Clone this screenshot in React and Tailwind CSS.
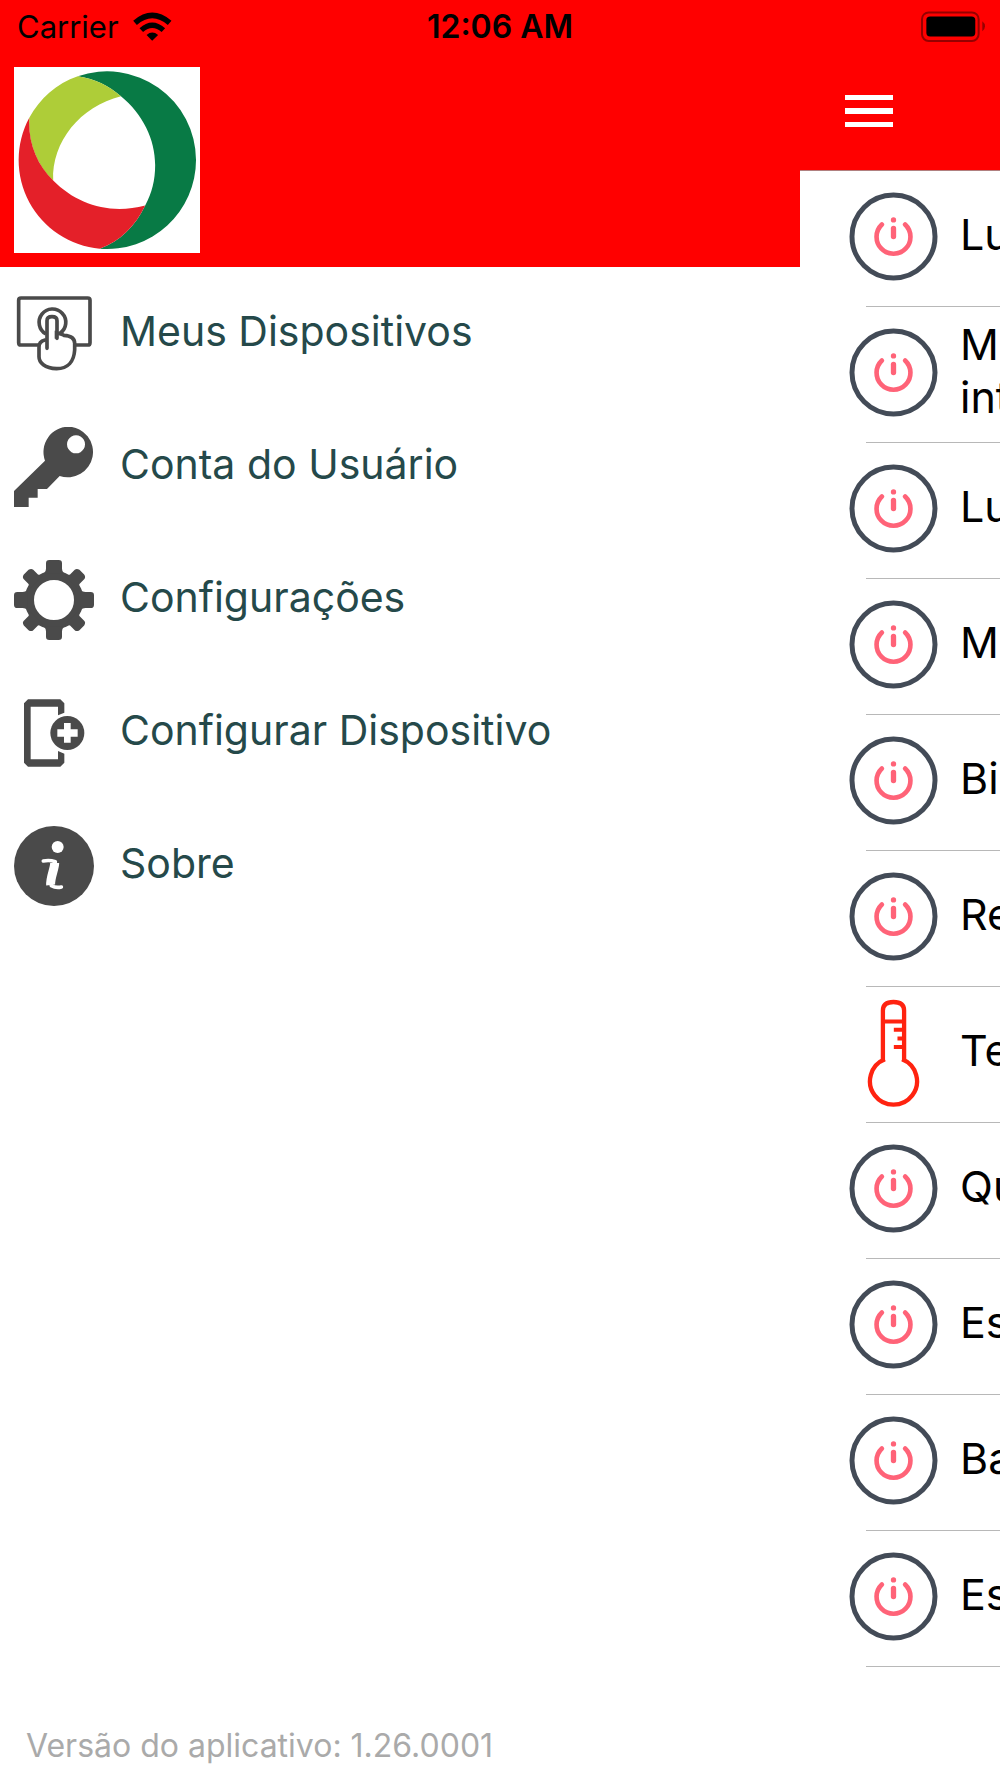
import React from "react";

const GRAY = "#4a4a4a";

function Logo() {
  return (
    <svg viewBox="40 200 560 560" className="size-[186px] bg-white" role="img" aria-label="Logo">
      <path fill="#087a45" d="M232 228A268 268 0 0 1 588 480A268 268 0 0 1 298 747C360 724 405 680 435 617C455 580 465 540 465 495C465 418 428 342 362 288C325 257 285 236 232 228Z" />
      <path fill="#aecd38" d="M232 228C285 236 325 257 362 288C240 318 153 425 158 542C110 495 82 430 86 353C118 295 168 250 232 228Z" />
      <path fill="#e42029" d="M86 353C82 430 110 495 158 542C230 615 330 645 435 617C405 680 360 724 298 747A268 268 0 0 1 86 353Z" />
    </svg>
  );
}

function TouchIcon() {
  return (
    <svg viewBox="40 40 240 240" className="size-20 shrink-0" fill="none" stroke={GRAY} strokeWidth="11" aria-hidden="true">
      <path d="M112 193H61Q54 193 54 186V59Q54 52 61 52H261Q268 52 268 59V186Q268 193 261 193H226" />
      <path d="M136 160A40 40 0 1 1 178 158" />
      <path strokeLinecap="round" d="M139 203V120Q139 108 154 108Q169 108 169 120V173" />
      <path strokeLinecap="round" d="M171 158Q186 162 190 164Q222 166 222 188V208C220 242 202 264 168 264C132 262 115 246 115 228V200Q114 183 133 178" />
      <path strokeWidth="8" d="M166 150V174" />
    </svg>
  );
}

function KeyIcon() {
  return (
    <svg viewBox="40 440 240 240" className="size-20 shrink-0" fill={GRAY} aria-hidden="true">
      <path fillRule="evenodd" d="M205 439A76 76 0 1 1 177 587L139 626H111V652H84V680H40V632L133 541A76 76 0 0 1 205 439ZM226 465a27 27 0 1 0 0.1 0Z" />
    </svg>
  );
}

function GearIcon() {
  return (
    <svg viewBox="40 44 240 240" className="size-20 shrink-0" fill={GRAY} aria-hidden="true">
      <circle cx="160" cy="164" r="74" fill="none" stroke={GRAY} strokeWidth="28" />
      {[0, 90, 180, 270].map((a) => (
        <path key={a} transform={`rotate(${a} 160 164)`} d="M130 84Q136 78 136 70V54Q136 44 146 44H174Q184 44 184 54V70Q184 78 190 84Z" />
      ))}
      {[45, 135, 225, 315].map((a) => (
        <path key={a} transform={`rotate(${a} 160 164)`} d="M134 88L140 76V56Q140 48 150 46H170Q180 48 180 56V76L186 88Z" />
      ))}
    </svg>
  );
}

function AddDeviceIcon() {
  return (
    <svg viewBox="40 444 240 240" className="size-20 shrink-0" fill={GRAY} aria-hidden="true">
      <path d="M82 463H179L191 475V503L172 511V485H90V643H172V618L191 626V653L179 665H82L70 653V475Z" />
      <circle cx="200" cy="564" r="51" />
      <path fill="white" d="M190 534H210V553H231V575H210V593H190V575H170V553H190Z" />
    </svg>
  );
}

function InfoIcon() {
  return (
    <svg viewBox="40 79 240 240" className="size-20 shrink-0" aria-hidden="true">
      <circle cx="160" cy="199" r="120" fill={GRAY} />
      <circle cx="171" cy="142" r="18" fill="white" />
      <path d="M128 184Q146 180 164 186C162 206 148 236 152 258Q166 266 182 262" fill="none" stroke="white" strokeWidth="11" strokeLinecap="round" strokeLinejoin="round" />
      <path d="M162 190C162 208 148 234 150 256" fill="none" stroke="white" strokeWidth="27" />
    </svg>
  );
}

function PowerIcon() {
  return (
    <svg viewBox="206 97 268 268" className="size-[89px]" fill="none" strokeLinecap="round" aria-hidden="true">
      <circle cx="340" cy="231" r="125" stroke="#434b57" strokeWidth="15" />
      <path stroke="#ff6378" strokeWidth="14" d="M305 195A51 51 0 1 0 375 195" />
      <path stroke="#ff6378" strokeWidth="16" d="M340 207V231" />
      <circle cx="340" cy="181" r="8" fill="#ff6378" />
    </svg>
  );
}

function ThermometerIcon() {
  return (
    <svg viewBox="260 116 160 324" className="h-[108px] w-[53px]" fill="none" stroke="#ff2310" strokeWidth="13" aria-hidden="true">
      <path d="M308 303V150Q308 124 340 124Q372 124 372 150V303" />
      <path d="M314 297A71 71 0 1 0 366 297" />
      <path strokeWidth="12" d="M308 183H372M341 208H372M352 234H372M341 260H372" />
    </svg>
  );
}

function StatusBar() {
  return (
    <header className="grid h-[53px] grid-cols-3 items-center bg-[#ff0000] text-black">
      <div className="flex items-center gap-[14px] pl-[17px]">
        <span className="text-[31px] leading-9">Carrier</span>
        <svg viewBox="400 37 118 88" className="h-[29px] w-[39px]" fill="none" stroke="black" aria-hidden="true">
          <path strokeWidth="17" d="M406 70Q458 25 511 70" />
          <path strokeWidth="16" d="M425 92Q458 62 492 92" />
          <path fill="black" stroke="none" d="M441 107Q458 92 476 107L458 124Z" />
        </svg>
      </div>
      <span className="text-center text-[32px] leading-9 font-semibold">12:06 AM</span>
      <svg viewBox="64 32 194 92" className="mr-[14px] h-[31px] w-[65px] justify-self-end" aria-label="Bateria" role="img">
        <rect x="67" y="36" width="169" height="85" rx="20" fill="none" stroke="#960000" strokeWidth="6" />
        <rect x="80" y="48" width="146" height="60" rx="11" fill="black" />
        <path d="M247 62Q255 68 255 77Q255 86 247 92Z" fill="#960000" />
      </svg>
    </header>
  );
}

const menu = [
  ["Meus Dispositivos", TouchIcon],
  ["Conta do Usuário", KeyIcon],
  ["Configurações", GearIcon],
  ["Configurar Dispositivo", AddDeviceIcon],
  ["Sobre", InfoIcon],
];

const devices = [
  ["Lu"],
  ["Ma", "int"],
  ["Lu"],
  ["Mo"],
  ["Bi"],
  ["Re"],
  ["Te"],
  ["Qu"],
  ["Es"],
  ["Ba"],
  ["Es"],
];

export default function App() {
  return (
    <div className="flex min-h-screen flex-col overflow-hidden bg-white font-['Inter',sans-serif]">
      <StatusBar />
      <div className="flex grow">
        <aside className="flex w-4/5 shrink-0 flex-col">
          <div className="bg-[#ff0000] p-[14px]">
            <Logo />
          </div>
          <nav>
            <ul>
              {menu.map(([label, Icon]) => (
                <li key={label}>
                  <a href="#" className="flex h-[133px] items-center gap-[26px] pl-[14px] text-[41px] text-[#25494a]">
                    <Icon />
                    <span className="pb-1">{label}</span>
                  </a>
                </li>
              ))}
            </ul>
          </nav>
          <p className="mt-auto pb-3 pl-[26px] text-[32px] leading-10 text-[#aaaaaa]">Versão do aplicativo: 1.26.0001</p>
        </aside>
        <main className="min-w-0 grow overflow-hidden">
          <div className="flex h-[118px] items-center border-b border-[#b08080] bg-[#ff0000] pb-[2px] pl-[45px]">
            <button type="button" aria-label="Abrir menu" className="flex w-12 flex-col gap-2">
              <span className="h-[5px] bg-white" />
              <span className="h-[6px] bg-white" />
              <span className="h-[5px] bg-white" />
            </button>
          </div>
          <ul>
            {devices.map((lines, i) => (
              <li key={i} className="flex h-[136px]">
                <div className="relative flex w-full items-center pb-[5px] pl-[49px]">
                  <span className="flex w-[89px] shrink-0 justify-center">
                    {lines[0] === "Te" ? <ThermometerIcon /> : <PowerIcon />}
                  </span>
                  <span className="pb-1 pl-[22px] text-[43px] leading-[53px] whitespace-nowrap text-black">
                    {lines.map((line) => (
                      <span key={line} className="block">{line}</span>
                    ))}
                  </span>
                  <span className="absolute right-0 bottom-0 left-[66px] border-b border-[#b8b8b8]" />
                </div>
              </li>
            ))}
          </ul>
        </main>
      </div>
    </div>
  );
}
